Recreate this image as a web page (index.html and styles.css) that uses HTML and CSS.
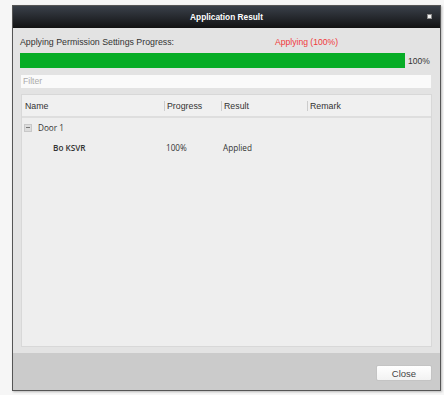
FILE: index.html
```html
<!DOCTYPE html>
<html>
<head>
<meta charset="utf-8">
<link rel="stylesheet" href="styles.css">
</head>
<body>
<div class="dialog">
  <div class="titlebar">
    <span class="title">Application Result</span>
    <span class="close-x"></span>
  </div>
  <div class="content">
    <div class="status-row">
      <span class="status-label">Applying Permission Settings Progress:</span>
      <span class="status-value">Applying (100%)</span>
    </div>
    <div class="progress-row">
      <div class="progress-track"><div class="progress-fill" style="width:100%"></div></div>
      <span class="progress-pct">100%</span>
    </div>
    <div class="filter">Filter</div>
    <div class="list">
      <div class="list-head">
        <div class="col c-name">Name</div>
        <div class="col c-prog"><span class="sep"></span>Progress</div>
        <div class="col c-res"><span class="sep"></span>Result</div>
        <div class="col c-rem"><span class="sep"></span>Remark</div>
        <div class="col c-end"><span class="sep"></span></div>
      </div>
      <div class="group-row">
        <span class="toggle"><span class="dash"></span></span>
        <span>Door 1</span>
      </div>
      <div class="item-row">
        <div class="col c-name indent">Bo KSVR</div>
        <div class="col c-prog">100%</div>
        <div class="col c-res">Applied</div>
        <div class="col c-rem"></div>
      </div>
    </div>
  </div>
  <div class="footer">
    <button class="btn">Close</button>
  </div>
</div>
</body>
</html>
```
FILE: styles.css
```css
html, body {
  margin: 0;
  padding: 0;
}
body {
  background: #f6f6f6;
  width: 444px;
  height: 395px;
  overflow: hidden;
  font-family: "Liberation Sans", Arial, sans-serif;
  font-size: 8.8px;
  color: #333;
}
.dialog {
  margin: 5px 0 0 12px;
  width: 427px;
  height: 384px;
  border: 1px solid #555;
  background: #e3e3e3;
  display: flex;
  flex-direction: column;
  box-shadow: 1px 1px 2px rgba(0,0,0,0.25);
}
.titlebar {
  height: 22px;
  flex: none;
  background: linear-gradient(#3a4049, #24272c 55%, #121212 100%);
  display: flex;
  align-items: center;
  justify-content: center;
  position: relative;
}
.title {
  color: #fff;
  font-weight: bold;
  font-size: 8.3px;
}
.close-x {
  position: absolute;
  right: 8px;
  top: 8px;
  width: 3px;
  height: 3px;
  background: #f4f4f4;
  border: 1px solid #8a8a8a;
}
.content {
  flex: 1;
  padding: 6px 8px 0 7px;
  display: flex;
  flex-direction: column;
}
.status-row {
  height: 16px;
  display: flex;
  align-items: center;
}
.status-label {
  width: 255px;
  color: #333;
}
.status-value {
  color: #f0393a;
  font-size: 8.6px;
}
.progress-row {
  margin-top: 3px;
  display: flex;
  align-items: center;
  height: 15px;
}
.progress-track {
  width: 385px;
  height: 15px;
  background: #fff;
}
.progress-fill {
  height: 100%;
  background: #07ad26;
}
.progress-pct {
  margin-left: 3px;
  font-size: 8.5px;
  color: #333;
}
.filter {
  margin-top: 7px;
  margin-left: 1px;
  width: 408px;
  height: 13px;
  background: #fafafa;
  color: #aaa;
  font-size: 8.6px;
  line-height: 13px;
  padding-left: 2px;
}
.list {
  margin-top: 6px;
  margin-left: 1px;
  width: 409px;
  height: 251px;
  background: #eeeeee;
  border: 1px solid #d8d8d8;
  font-family: "Open Sans", "Noto Sans", sans-serif;
  font-size: 8.2px;
  color: #333;
}
.list-head {
  display: flex;
  height: 21px;
  align-items: center;
  border-bottom: 2px solid #dedede;
  background: #f0f0f0;
  font-family: "Liberation Sans", Arial, sans-serif;
  font-size: 8.8px;
}
.col {
  display: flex;
  align-items: center;
  position: relative;
}
.c-name { width: 139px; padding-left: 3px; }
.c-prog { width: 57px; }
.c-res { width: 86px; }
.c-rem { width: 121px; }
.c-end { width: 1px; }
.sep {
  display: inline-block;
  width: 1px;
  height: 10px;
  background: #ccc;
  margin-right: 2px;
}
.group-row {
  height: 19px;
  display: flex;
  align-items: center;
  padding-left: 2px;
  gap: 6px;
}
.toggle {
  width: 6px;
  height: 6px;
  background: #dcdcdc;
  border: 1px solid #c8c8c8;
  display: flex;
  align-items: center;
  justify-content: center;
}
.dash {
  width: 4px;
  height: 1px;
  background: #777;
}
.item-row {
  display: flex;
  height: 20px;
  align-items: center;
}
.item-row .c-prog { padding-left: 2px; width: 55px; }
.item-row .c-res { padding-left: 2px; width: 84px; }
.indent { padding-left: 31px; width: 111px; font-weight: 600; }
.footer {
  height: 37px;
  flex: none;
  background: #cbcbcb;
  display: flex;
  align-items: center;
  justify-content: flex-end;
  padding-right: 8px;
}
.btn {
  width: 56px;
  height: 16px;
  background: linear-gradient(#ffffff, #f2f2f2);
  border: 1px solid #c4c4c4;
  border-radius: 2px;
  font-family: "Liberation Sans", Arial, sans-serif;
  font-size: 9.5px;
  color: #444;
  padding: 0;
  margin-top: 3px;
}
```
